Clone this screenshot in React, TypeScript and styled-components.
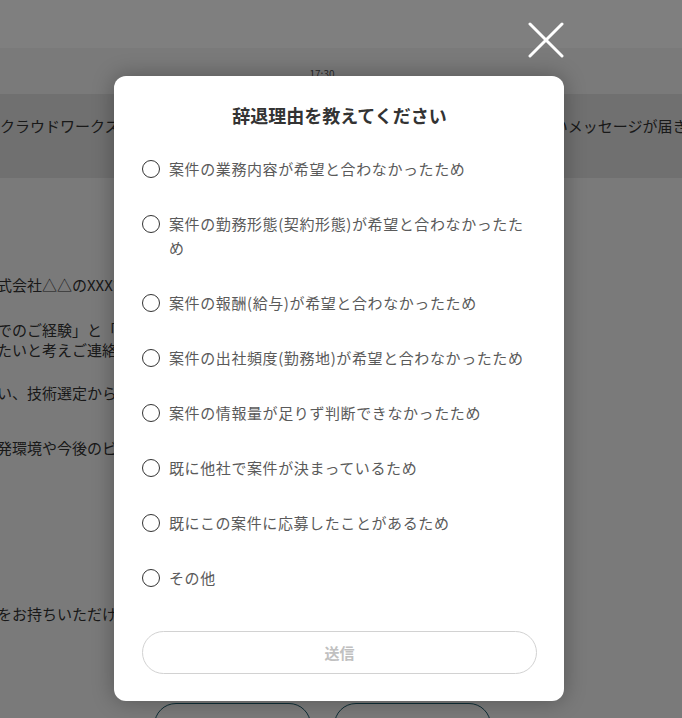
import styled, { createGlobalStyle } from "styled-components";

const GlobalStyle = createGlobalStyle`
    html, body {
        margin: 0;
        padding: 0;
    }

    body {
        font-family: "Noto Sans CJK JP", "Noto Sans", sans-serif;
        background-color: #f5f5f5;
    }
`;

const Page = styled.div`
    position: relative;
    display: flex;
    flex-direction: column;
    height: 718px;
    overflow: hidden;
    background-color: #f5f5f5;
`;

const TopBar = styled.header`
    height: 48px;
    flex-shrink: 0;
    background-color: #fff;
`;

const TimeRow = styled.div`
    display: flex;
    justify-content: center;
    align-items: flex-end;
    height: 46px;
    box-sizing: border-box;
    padding: 0 38px 14px 0;
    flex-shrink: 0;

    span {
        font-size: 10px;
        line-height: 12px;
        color: #555;
    }
`;

const NoticeBand = styled.div`
    height: 84px;
    box-sizing: border-box;
    padding-top: 21px;
    flex-shrink: 0;
    background-color: #e0e0e0;
    font-size: 15px;
    line-height: 22px;
    color: #333;
    white-space: nowrap;
    overflow: hidden;
`;

const MessageArea = styled.div`
    flex: 1;
    padding: 97px 38px 0 0;
`;

const TextBlock = styled.div`
    margin-left: -18px;
    font-size: 15px;
    line-height: 20px;
    color: #333;
    white-space: nowrap;
`;

const Paragraph = styled.p<{ $space: number }>`
    margin: 0 0 ${(p) => p.$space}px 0;
`;

const ActionRow = styled.div`
    display: flex;
    justify-content: center;
    gap: 23px;
    margin-top: 79px;
`;

const ActionButton = styled.button`
    width: 157px;
    height: 44px;
    border: 1.5px solid #1c5a6c;
    border-radius: 22px;
    background-color: transparent;
    color: #1c5a6c;
    font-family: inherit;
    font-size: 15px;
    font-weight: bold;
`;

const Overlay = styled.div`
    position: absolute;
    inset: 0;
    display: flex;
    flex-direction: column;
    align-items: center;
    padding: 22px 4px 0 0;
    background-color: rgba(0, 0, 0, 0.5);
`;

const ModalColumn = styled.div`
    display: flex;
    flex-direction: column;
    width: 450px;
`;

const CloseButton = styled.button`
    align-self: flex-end;
    width: 36px;
    height: 36px;
    padding: 0;
    margin-bottom: 18px;
    border: none;
    background: none;
    cursor: pointer;

    svg {
        display: block;
    }
`;

const Modal = styled.div`
    display: flex;
    flex-direction: column;
    padding: 26px 27px 27px 28px;
    border-radius: 12px;
    background-color: #fff;
    box-shadow: 0 0 22px rgba(0, 0, 0, 0.3);
`;

const Title = styled.h2`
    margin: 0;
    text-align: center;
    font-size: 18px;
    line-height: 27px;
    font-weight: bold;
    color: #333;
`;

const ReasonList = styled.div`
    display: flex;
    flex-direction: column;
    gap: 31px;
    margin-top: 28px;
`;

const ReasonItem = styled.label`
    display: flex;
    align-items: flex-start;
    gap: 9px;
    font-size: 15px;
    line-height: 24px;
    letter-spacing: 0.04em;
    color: #5a5a5a;
    cursor: pointer;
`;

const Radio = styled.input`
    appearance: none;
    flex-shrink: 0;
    box-sizing: border-box;
    width: 18px;
    height: 18px;
    margin: 3px 0 0 0;
    border: 1.5px solid #333;
    border-radius: 50%;
    background-color: #fff;
`;

const SubmitButton = styled.button`
    margin-top: 41px;
    height: 43px;
    width: 100%;
    border: 1px solid #d2d2d2;
    border-radius: 22px;
    background-color: #fff;
    color: #c0c0c0;
    font-family: inherit;
    font-size: 15px;
    font-weight: bold;
`;

const reasons = [
    "案件の業務内容が希望と合わなかったため",
    "案件の勤務形態(契約形態)が希望と合わなかったため",
    "案件の報酬(給与)が希望と合わなかったため",
    "案件の出社頻度(勤務地)が希望と合わなかったため",
    "案件の情報量が足りず判断できなかったため",
    "既に他社で案件が決まっているため",
    "既にこの案件に応募したことがあるため",
    "その他",
];

export default function App() {
    return (
        <>
            <GlobalStyle />
            <Page>
                <TopBar />
                <TimeRow>
                    <span>17:30</span>
                </TimeRow>
                <NoticeBand>
                    クラウドワークスをご利用いただきありがとうございます。株式会社△△より新しいメッセージが届きました
                </NoticeBand>
                <MessageArea>
                    <TextBlock>
                        <Paragraph $space={25}>株式会社△△のXXXです。</Paragraph>
                        <Paragraph $space={23}>
                            までのご経験」と「弊社の事業」がマッチしていると感じ、
                            <br />
                            いたいと考えご連絡いたしました。
                        </Paragraph>
                        <Paragraph $space={35}>行い、技術選定から設計・開発までを一貫してお任せしたいと考えております。</Paragraph>
                        <Paragraph $space={146}>開発環境や今後のビジョンについても、ぜひ直接お話しできればと思います。</Paragraph>
                        <Paragraph $space={0}>味をお持ちいただけましたら、ぜひ一度お話しさせてください。</Paragraph>
                    </TextBlock>
                    <ActionRow>
                        <ActionButton>辞退する</ActionButton>
                        <ActionButton>話を聞く</ActionButton>
                    </ActionRow>
                </MessageArea>

                <Overlay>
                    <ModalColumn>
                        <CloseButton aria-label="閉じる">
                            <svg width="36" height="36" viewBox="0 0 36 36">
                                <path d="M2 2 L34 34 M34 2 L2 34" stroke="#fff" strokeWidth="3" strokeLinecap="round" fill="none" />
                            </svg>
                        </CloseButton>
                        <Modal>
                            <Title>辞退理由を教えてください</Title>
                            <ReasonList>
                                {reasons.map((reason, index) => (
                                    <ReasonItem key={index}>
                                        <Radio type="radio" name="reason" />
                                        <span>{reason}</span>
                                    </ReasonItem>
                                ))}
                            </ReasonList>
                            <SubmitButton disabled>送信</SubmitButton>
                        </Modal>
                    </ModalColumn>
                </Overlay>
            </Page>
        </>
    );
}
